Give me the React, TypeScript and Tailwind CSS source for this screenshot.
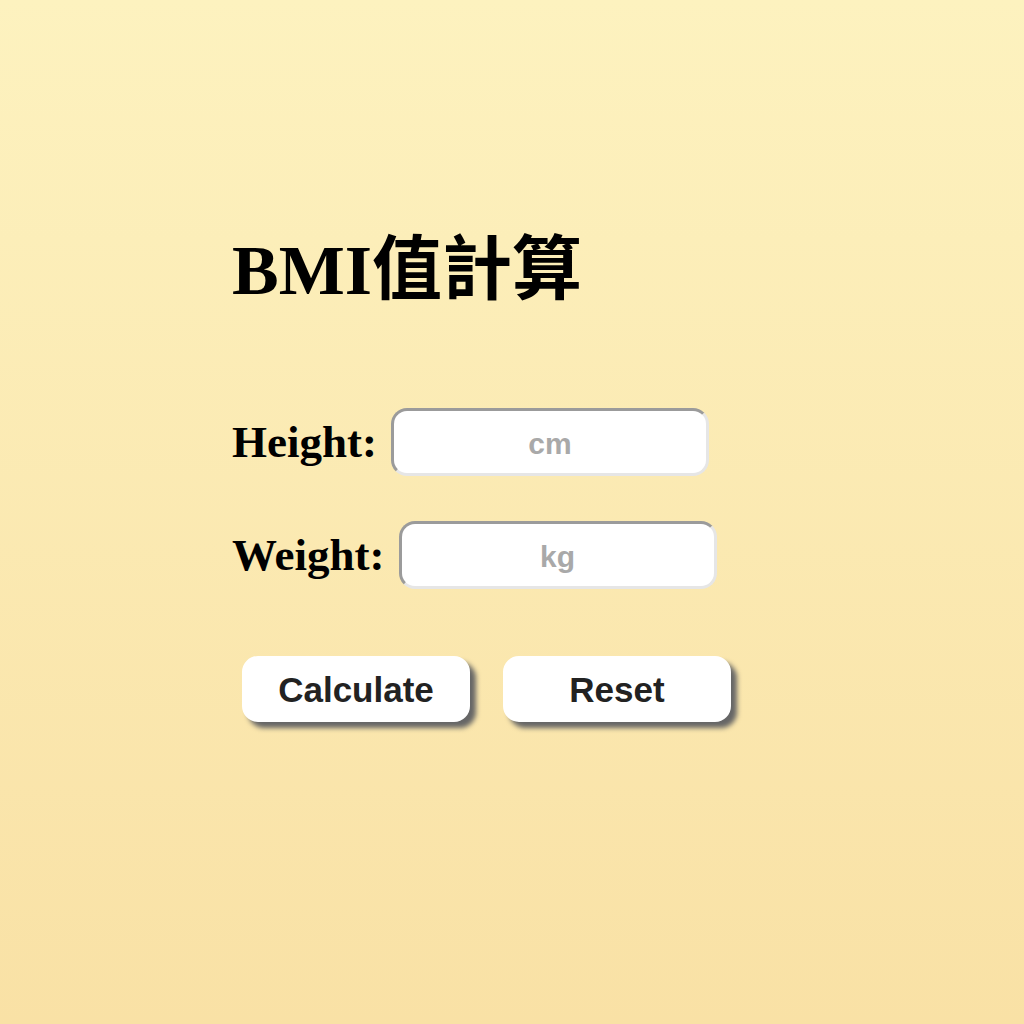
import { useState } from "react"

const serif = "font-['Liberation_Serif','Noto_Sans_CJK_TC',serif]"
const sans = "font-['Liberation_Sans','Noto_Sans',sans-serif]"

interface FieldProps {
  label: string
  unit: string
  value: string
  onChange: (v: string) => void
}

const Field = ({ label, unit, value, onChange }: FieldProps) => (
  <div className="flex items-center gap-[14px]">
    <label className={`${serif} text-[45px] font-bold leading-none text-black`}>{label}</label>
    <input
      value={value}
      onChange={(e) => onChange(e.target.value)}
      placeholder={unit}
      className={`${sans} h-[68px] w-[318px] rounded-[16px] border-[3px] border-t-[#9b9b9b] border-l-[#9b9b9b] border-r-[#e6e6e6] border-b-[#e6e6e6] bg-white pt-[4px] text-center text-[30px] font-bold text-[#333] outline-none placeholder:text-[#a9a9a9]`}
    />
  </div>
)

export default function App() {
  const [height, setHeight] = useState("")
  const [weight, setWeight] = useState("")

  return (
    <div className="min-h-screen w-full bg-gradient-to-b from-[#fdf2bf] to-[#f9e1a5]">
      <div className="flex flex-col pl-[232px] pt-[231px]">
        <h1 className={`${serif} text-[70px] font-bold leading-[80px] text-black`}>BMI值計算</h1>

        <div className="mt-[97px] flex flex-col gap-[45px]">
          <Field label="Height:" unit="cm" value={height} onChange={setHeight} />
          <Field label="Weight:" unit="kg" value={weight} onChange={setWeight} />
        </div>

        <div className="ml-[10px] mt-[67px] flex gap-[33px]">
          <button
            className={`${sans} h-[66px] w-[228px] rounded-[16px] border-2 border-white bg-white pt-[3px] text-[35px] font-bold text-[#222] shadow-[6px_6px_5px_#666]`}
          >
            Calculate
          </button>
          <button
            onClick={() => {
              setHeight("")
              setWeight("")
            }}
            className={`${sans} h-[66px] w-[228px] rounded-[16px] border-2 border-white bg-white pt-[3px] text-[35px] font-bold text-[#222] shadow-[6px_6px_5px_#666]`}
          >
            Reset
          </button>
        </div>
      </div>
    </div>
  )
}
